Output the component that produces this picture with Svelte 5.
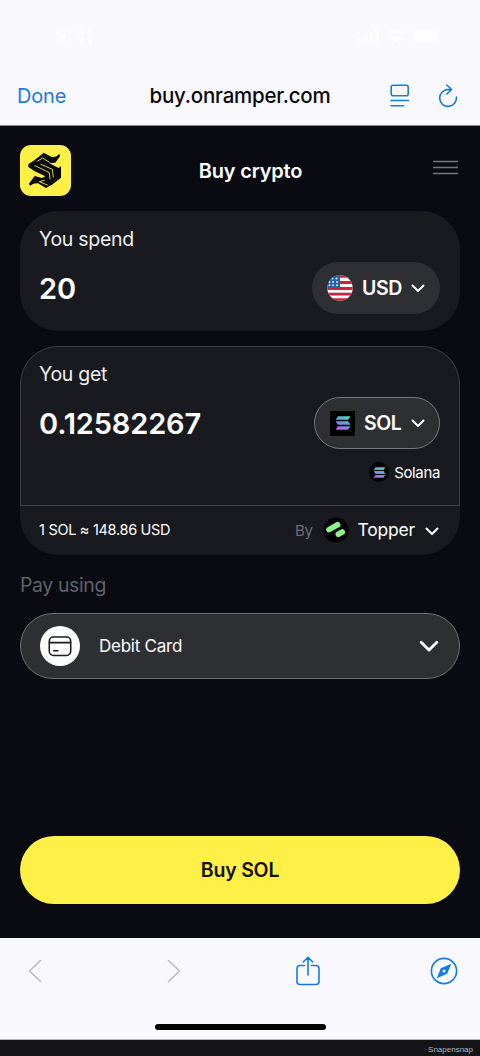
<script>
  let spendAmount = '20';
  let getAmount = '0.12582267';

  const spendCurrency = 'USD';
  const getCurrency = 'SOL';
  const network = 'Solana';
  const provider = 'Topper';
  const paymentMethod = 'Debit Card';
</script>

{#snippet chevron()}
  <svg class="chevron" viewBox="0 0 14 9" aria-hidden="true">
    <path d="M1.5 1.5 7 7l5.5-5.5" />
  </svg>
{/snippet}

{#snippet solanaMark()}
  <svg class="solana" viewBox="0 0 16 14" aria-hidden="true">
    <defs>
      <linearGradient id="solana-fill" gradientUnits="userSpaceOnUse" x1="13" y1="0" x2="4" y2="14">
        <stop offset="0" stop-color="#43e0b0" />
        <stop offset="0.5" stop-color="#6f9ad6" />
        <stop offset="1" stop-color="#b35cf5" />
      </linearGradient>
    </defs>
    <path fill="url(#solana-fill)" d="M3 .2h12.500L13 3.800H.5zM.5 5.200H13l2.500 3.600H3zM3 10.200h12.500L13 13.800H.5z" />
  </svg>
{/snippet}

<div class="phone">
  <header class="browser-header">
    <div class="status-bar">
      <span class="time">9:41</span>
      <svg class="status-icons" viewBox="0 0 86 16" aria-hidden="true">
        <rect x="1" y="10" width="4" height="4" rx="1" />
        <rect x="7" y="7" width="4" height="7" rx="1" />
        <rect x="13" y="4" width="4" height="10" rx="1" />
        <rect x="19" y="0" width="4" height="14" rx="1" />
        <path d="M31 4q8.500-6 17 0l-2 2.500q-6.500-4.500-13 0zM34.500 8.500q5-3.500 10 0L39.500 14z" />
        <rect x="58" y="1" width="25" height="12" rx="4" />
      </svg>
    </div>
    <nav class="address-bar">
      <button type="button" class="done">Done</button>
      <span class="address">buy.onramper.com</span>
      <div class="address-actions">
        <button type="button" aria-label="Page menu">
          <svg width="20" height="24" viewBox="0 0 20 24">
            <rect x="1.200" y="1.200" width="17" height="10.500" rx="2" />
            <path d="M1 16.500h17.500M1 21.700h12.500" />
          </svg>
        </button>
        <button type="button" aria-label="Reload">
          <svg width="20" height="24" viewBox="0 0 20 24">
            <path d="M13.500 5.600H10A8.400 8.400 0 1 0 18.400 13M8.800 1l4.800 4.500-4.800 4.500" />
          </svg>
        </button>
      </div>
    </nav>
  </header>

  <main class="page">
    <div class="page-header">
      <div class="logo">
        <svg viewBox="30 30 153 153" aria-hidden="true">
          <path d="M74 75 101 53q14 7 25 14 13 0 21-10l4 5-15 21-18 2 28 14 7-6v35l-25 20-20 11-24-14q-14-1-23 7l-5-5 18-24 22 6 10-5-32-15-19-13V88z" />
          <path class="logo-cut" d="m83 78 15-9 20 13M75 92l43 21 2 19M93 88l34 15 3 23M103 136l-15 4 24 10" />
        </svg>
      </div>
      <h1>Buy crypto</h1>
      <button type="button" class="menu" aria-label="Menu">
        <svg width="25" height="15" viewBox="0 0 25 15">
          <path d="M.5 1.500h24M.5 7.500h24M.5 13.500h24" />
        </svg>
      </button>
    </div>

    <section class="card spend">
      <div class="label">You spend</div>
      <div class="amount-row">
        <span class="amount">{spendAmount}</span>
        <button type="button" class="currency usd">
          <svg class="flag" viewBox="0 0 26 26" aria-hidden="true">
            <clipPath id="flag-circle"><circle cx="13" cy="13" r="12.700" /></clipPath>
            <g clip-path="url(#flag-circle)">
              <path fill="#f7f7fa" d="M0 0h26v26H0z" />
              <path fill="#cf1f42" d="M0 0h26v2.700H0zM0 6h26v2.900H0zM0 12h26v2.900H0zM0 17.700h26v2.900H0zM0 23.300h26V26H0z" />
              <path fill="#1765ad" d="M0 0h13v12H0z" />
              <g fill="#d7e9fb">
                <circle cx="5.500" cy="3.500" r="1" /><circle cx="9.500" cy="3.500" r="1" />
                <circle cx="2.500" cy="7" r="1" /><circle cx="6" cy="7" r="1" /><circle cx="10" cy="7" r="1" />
                <circle cx="2.500" cy="10.300" r="1" /><circle cx="6" cy="10.300" r="1" /><circle cx="10" cy="10.300" r="1" />
              </g>
            </g>
          </svg>
          <span>{spendCurrency}</span>
          {@render chevron()}
        </button>
      </div>
    </section>

    <section class="quote">
      <div class="card get">
        <div class="label">You get</div>
        <div class="amount-row">
          <span class="amount">{getAmount}</span>
          <button type="button" class="currency sol">
            <span class="coin">{@render solanaMark()}</span>
            <span>{getCurrency}</span>
            {@render chevron()}
          </button>
        </div>
        <div class="network">
          <span class="network-icon">{@render solanaMark()}</span>
          <span>{network}</span>
        </div>
      </div>
      <div class="rate-row">
        <span class="rate">1 SOL ≈ 148.86 USD</span>
        <span class="by">By</span>
        <button type="button" class="provider">
          <svg class="topper" viewBox="0 0 26 26" aria-hidden="true">
            <circle cx="13" cy="13" r="12.500" />
            <path d="M6 12.600 14.600 7.800M15.300 17.200l4-2.200" />
          </svg>
          <span>{provider}</span>
          {@render chevron()}
        </button>
      </div>
    </section>

    <div class="pay-label">Pay using</div>
    <button type="button" class="method">
      <span class="method-icon">
        <svg width="24" height="21" viewBox="0 0 22 20" aria-hidden="true">
          <rect x=".8" y="1" width="20.400" height="17.500" rx="4" />
          <path d="M1 6.300h20M5 14h4" />
        </svg>
      </span>
      <span>{paymentMethod}</span>
      {@render chevron()}
    </button>

    <button type="button" class="buy">Buy {getCurrency}</button>
  </main>

  <footer class="toolbar">
    <div class="toolbar-actions">
      <button type="button" class="disabled" aria-label="Back">
        <svg width="14" height="24" viewBox="0 0 14 24"><path d="M12.500 1.500 1.500 12l11 10.500" /></svg>
      </button>
      <button type="button" class="disabled" aria-label="Forward">
        <svg width="14" height="24" viewBox="0 0 14 24"><path d="m1.500 1.500 11 10.500-11 10.500" /></svg>
      </button>
      <button type="button" aria-label="Share">
        <svg width="24" height="30" viewBox="0 0 24 30">
          <path d="M8.500 9.500H4A3 3 0 0 0 1 12.500v13A3 3 0 0 0 4 28.500h16a3 3 0 0 0 3-3v-13a3 3 0 0 0-3-3h-4.500M12 19V1.500M7.300 6 12 1.200 16.700 6" />
        </svg>
      </button>
      <button type="button" aria-label="Open in browser">
        <svg width="28" height="28" viewBox="0 0 28 28">
          <circle cx="14" cy="14" r="12.600" />
          <path class="needle" fill-rule="evenodd" d="M21.300 6.700 17.200 16.800 6.700 21.300 10.800 11.200zM14 12.500a1.500 1.500 0 1 0 0 3 1.500 1.500 0 0 0 0-3z" />
        </svg>
      </button>
    </div>
    <div class="home-indicator"></div>
  </footer>
  <div class="credit">Snapensnap</div>
</div>

<style>
  :global(body) {
    margin: 0;
    background: #151517;
  }

  .phone {
    width: 480px;
    height: 1056px;
    display: flex;
    flex-direction: column;
    overflow: hidden;
    font-family: Inter, 'Liberation Sans', sans-serif;
    color: #fff;
  }

  button {
    margin: 0;
    padding: 0;
    border: 0;
    background: none;
    color: inherit;
    font: inherit;
    letter-spacing: inherit;
  }

  svg {
    display: block;
    flex: none;
    fill: none;
    stroke-linecap: round;
    stroke-linejoin: round;
  }

  .browser-header {
    height: 126px;
    box-sizing: border-box;
    background: #f9f8fc;
    border-bottom: 1px solid #8c8c90;
  }

  .status-bar {
    height: 65px;
    box-sizing: border-box;
    padding: 8px 38px 0 55px;
    display: flex;
    justify-content: space-between;
    align-items: center;
    color: #fdfdfe;
  }

  .time {
    font-size: 19px;
    font-weight: 600;
  }

  .status-icons {
    width: 86px;
    height: 16px;
    fill: #fefeff;
  }

  .address-bar {
    height: 61px;
    padding: 0 22px 0 17px;
    display: grid;
    grid-template-columns: 108px 1fr 103px;
    align-items: center;
    color: #1b7cd8;
  }

  .done {
    justify-self: start;
    font-size: 20px;
    letter-spacing: -0.2px;
  }

  .address {
    text-align: center;
    font-size: 20.5px;
    font-weight: 500;
    letter-spacing: -0.22px;
    color: #08080c;
  }

  .address-actions {
    display: flex;
    justify-content: flex-end;
    gap: 28px;
  }

  .address-actions svg {
    stroke: #1b7cd8;
    stroke-width: 1.6;
  }

  .page {
    height: 812px;
    box-sizing: border-box;
    padding: 19px 20px 34px;
    display: flex;
    flex-direction: column;
    background: #090a12;
  }

  .page-header {
    height: 51px;
    display: grid;
    grid-template-columns: 51px 1fr 30px;
    align-items: center;
    margin-bottom: 15px;
  }

  .logo {
    width: 51px;
    height: 51px;
    border-radius: 11px;
    background: #fff047;
  }

  .logo svg {
    width: 51px;
    height: 51px;
    fill: #090909;
  }

  .logo .logo-cut {
    fill: none;
    stroke: #fff047;
    stroke-width: 2.6;
  }

  h1 {
    margin: 0;
    text-align: center;
    font-size: 20px;
    font-weight: 600;
    letter-spacing: -0.2px;
  }

  .menu {
    justify-self: end;
    padding: 0 2px 7px 0;
  }

  .menu svg {
    stroke: #77777c;
    stroke-width: 1.5;
  }

  .card {
    box-sizing: border-box;
    background: #191a20;
  }

  .spend {
    height: 120px;
    padding: 15px 20px 0 19px;
    border-radius: 38px;
    margin-bottom: 15px;
  }

  .label {
    height: 25px;
    line-height: 26px;
    font-size: 19.5px;
    letter-spacing: -0.28px;
    color: #eeeef1;
  }

  .amount-row {
    display: flex;
    justify-content: space-between;
    align-items: center;
    margin-top: 11px;
  }

  .amount {
    font-size: 29px;
    font-weight: 600;
    letter-spacing: -0.15px;
  }

  .currency {
    height: 52px;
    box-sizing: border-box;
    padding: 0 15px;
    border-radius: 26px;
    display: flex;
    align-items: center;
    background: #2e2f32;
    font-size: 19.5px;
    font-weight: 600;
    letter-spacing: -0.4px;
  }

  .usd {
    width: 128px;
  }

  .sol {
    width: 126px;
    border: 1px solid #77787b;
  }

  .currency .chevron {
    margin-left: auto;
  }

  .chevron {
    width: 14px;
    height: 9px;
    stroke: #fff;
    stroke-width: 2;
  }

  .flag {
    width: 26px;
    height: 26px;
    margin-right: 9px;
  }

  .coin {
    width: 25px;
    height: 25px;
    display: grid;
    place-items: center;
    margin-right: 9px;
    background: #000;
  }

  .solana {
    width: 16px;
    height: 14px;
  }

  .get {
    height: 160px;
    padding: 14px 19px 0 18px;
    border: 1px solid #3f4045;
    border-radius: 38px 38px 0 0;
  }

  .sol.currency {
    padding: 0 14px 0 15px;
  }

  .network {
    display: flex;
    justify-content: flex-end;
    align-items: center;
    gap: 5px;
    margin-top: 13px;
    font-size: 15px;
    letter-spacing: -0.35px;
  }

  .network-icon {
    width: 20px;
    height: 20px;
    display: grid;
    place-items: center;
    border-radius: 50%;
    background: #000;
  }

  .network .solana {
    width: 13px;
    height: 11px;
  }

  .rate-row {
    height: 49px;
    box-sizing: border-box;
    padding: 0 21px 0 19px;
    display: flex;
    align-items: center;
    border-radius: 0 0 38px 38px;
    background: #191a20;
  }

  .rate {
    margin-top: -2px;
    font-size: 14.5px;
    letter-spacing: -0.3px;
  }

  .by {
    margin-left: auto;
    margin-top: -1px;
    font-size: 15px;
    letter-spacing: -0.3px;
    color: #6d6e73;
  }

  .provider {
    display: flex;
    align-items: center;
    margin: -2px 0 0 10px;
    font-size: 17.5px;
    letter-spacing: -0.2px;
  }

  .topper {
    width: 26px;
    height: 26px;
    margin-right: 9px;
    fill: #000;
  }

  .topper path {
    stroke: #8bf58b;
    stroke-width: 5.6;
  }

  .provider .chevron {
    margin: 3px 0 0 10px;
  }

  .pay-label {
    height: 26px;
    line-height: 26px;
    margin: 17px 0 15px;
    font-size: 19.5px;
    letter-spacing: -0.4px;
    color: #606166;
  }

  .method {
    height: 66px;
    padding: 0 20px 0 19px;
    display: flex;
    align-items: center;
    border: 1px solid #6f7073;
    border-radius: 33px;
    background: #2e2f32;
    font-size: 17px;
    letter-spacing: -0.25px;
  }

  .method-icon {
    width: 40px;
    height: 40px;
    display: grid;
    place-items: center;
    margin-right: 19px;
    border-radius: 50%;
    background: #fff;
  }

  .method-icon svg {
    stroke: #1c1c1f;
    stroke-width: 1.5;
  }

  .method .chevron {
    width: 20px;
    height: 13px;
    margin-left: auto;
  }

  .buy {
    height: 68px;
    margin-top: auto;
    border-radius: 34px;
    background: #fff047;
    color: #111108;
    font-size: 19.5px;
    font-weight: 600;
    letter-spacing: -0.2px;
  }

  .toolbar {
    height: 102px;
    box-sizing: border-box;
    padding: 18px 22px 0 28px;
    background: #f9f8fc;
    border-bottom: 1px solid #b5b5b9;
  }

  .toolbar-actions {
    height: 30px;
    display: grid;
    grid-template-columns: 139px 129px 1fr 28px;
    align-items: center;
  }

  .toolbar-actions svg {
    stroke: #147be2;
    stroke-width: 1.6;
  }

  .toolbar-actions .disabled svg {
    stroke: #bcbbc0;
  }

  .toolbar-actions .needle {
    fill: #147be2;
    stroke: none;
  }

  .home-indicator {
    width: 171px;
    height: 6px;
    margin: 38px auto 0;
    border-radius: 3px;
    background: #000;
    transform: translateX(-3px);
  }

  .credit {
    height: 16px;
    box-sizing: border-box;
    padding: 4px 7px 0 0;
    line-height: 12px;
    text-align: right;
    font-family: 'Liberation Sans', sans-serif;
    font-size: 8px;
    color: #b4b4b7;
    background: #151517;
  }
</style>
